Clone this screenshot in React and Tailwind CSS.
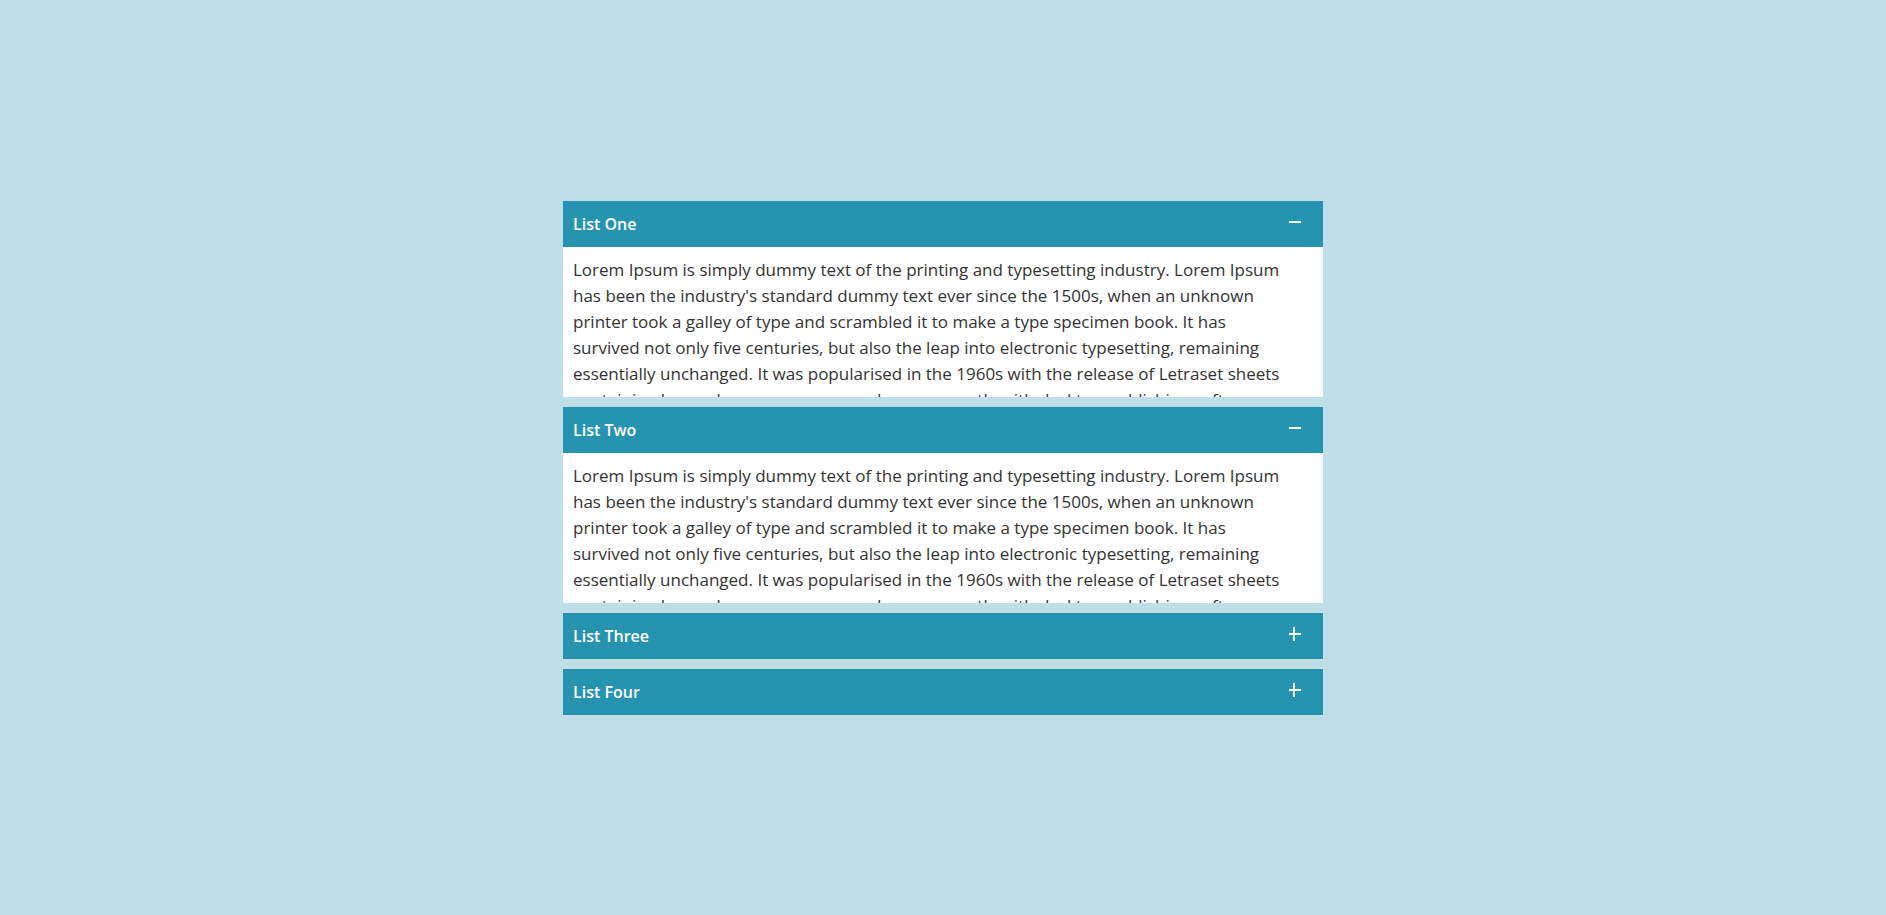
import { useState } from 'react';

const lines = [
    'Lorem Ipsum is simply dummy text of the printing and typesetting industry. Lorem Ipsum',
    "has been the industry's standard dummy text ever since the 1500s, when an unknown",
    'printer took a galley of type and scrambled it to make a type specimen book. It has',
    'survived not only five centuries, but also the leap into electronic typesetting, remaining',
    'essentially unchanged. It was popularised in the 1960s with the release of Letraset sheets',
    'containing Lorem Ipsum passages, and more recently with desktop publishing software',
];

const items = [
    { title: 'List One', open: true },
    { title: 'List Two', open: true },
    { title: 'List Three', open: false },
    { title: 'List Four', open: false },
];

function Toggle({ open }) {
    return (
        <svg width="14" height="14" viewBox="0 0 14 14" className="mb-[4px]">
            <rect x="2" y="6" width="12" height="2" fill="#ffffff" />
            {!open && <rect x="6" y="0" width="2" height="14" fill="#ffffff" />}
        </svg>
    );
}

function Item({ title, defaultOpen }) {
    const [open, setOpen] = useState(defaultOpen);

    return (
        <div className="mb-[10px]">
            <button
                onClick={() => setOpen(o => !o)}
                className="w-full h-[46px] bg-[#2694b0] flex items-center justify-between pl-[10px] pr-[22px] text-white text-[16px] font-semibold cursor-pointer"
            >
                <span>{title}</span>
                <Toggle open={open} />
            </button>
            {open && (
                <div className="bg-white h-[150px] overflow-hidden px-[10px] pt-[10px] text-[#333333] text-[17px] leading-[26px]">
                    {lines.map((line, i) => (
                        <div key={i} className="whitespace-nowrap">{line}</div>
                    ))}
                </div>
            )}
        </div>
    );
}

export default function App() {
    return (
        <div className="min-h-screen bg-[#bedfe7] pt-[201px] font-['Open_Sans',sans-serif]">
            <div className="w-[760px] mx-auto">
                {items.map(item => (
                    <Item key={item.title} title={item.title} defaultOpen={item.open} />
                ))}
            </div>
        </div>
    );
}
